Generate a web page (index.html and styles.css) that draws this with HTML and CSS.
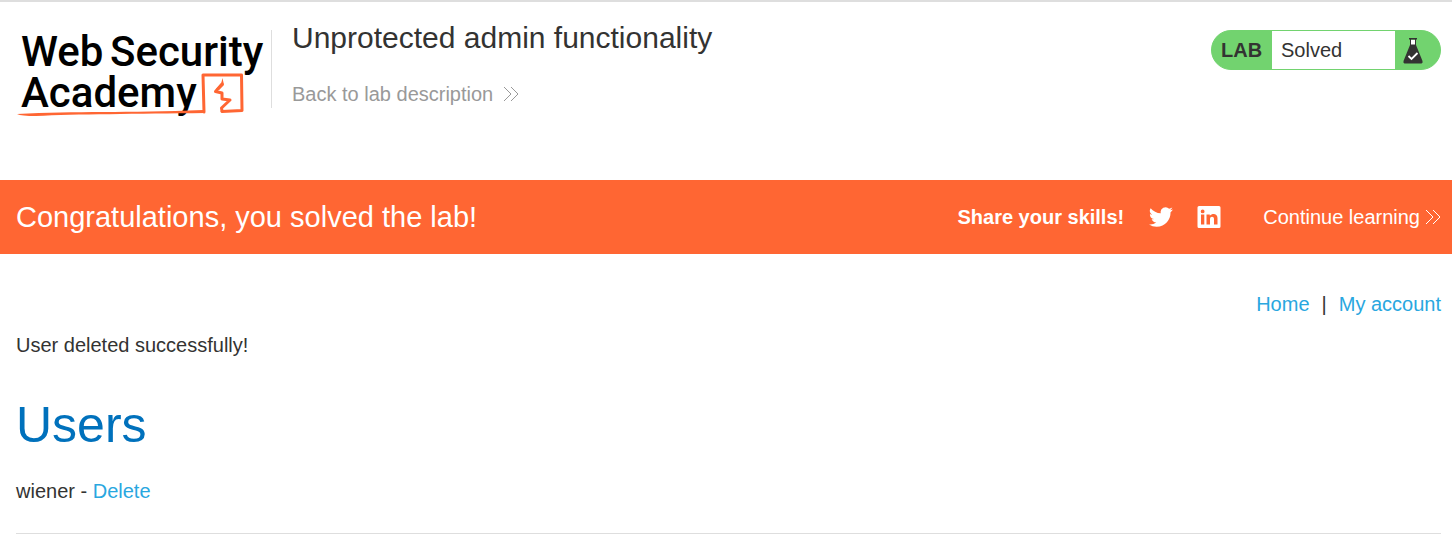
FILE: index.html
```html
<!DOCTYPE html>
<html lang="en">
<head>
<meta charset="utf-8">
<meta name="viewport" content="width=device-width, initial-scale=1">
<title>Unprotected admin functionality</title>
<link rel="stylesheet" href="styles.css">
</head>
<body>
<header class="lab-header">
  <a class="logo" href="#" aria-label="Web Security Academy">
    <svg class="logo-art" viewBox="0 0 256 90">
      <g class="logo-text">
        <text x="5" y="38">Web</text>
        <text x="94" y="38">Security</text>
        <text x="5" y="79">Academy</text>
      </g>
      <g fill="none" stroke="#ff6633" stroke-linejoin="round" stroke-linecap="round">
        <path stroke-width="3" d="M188 84L187 47L225.500 47L226 82.500L206 83.500"/>
        <path stroke-width="3" d="M206 56L199.500 63.500L206 65L206 71L214 72L205.500 80L206 83"/>
      </g>
      <path fill="#ff6633" d="M206.500 50L208 57L203 62L200 61L205 56Z"/>
      <path fill="#ff6633" d="M1 86C60 83 110 85 187 82L189 85C120 86 60 86 20 88Q5 88 1 86Z"/>
    </svg>
  </a>
  <div class="title">
    <h2 class="title-text">Unprotected admin functionality</h2>
    <a class="back" href="#">Back to lab description
      <svg class="chevrons" viewBox="0 0 16 16"><path d="M1 1l7 7-7 7M8 1l7 7-7 7"/></svg>
    </a>
  </div>
  <div class="status">
    <span class="status-label">LAB</span>
    <span class="status-value">Solved</span>
    <span class="status-icon">
      <svg class="flask" viewBox="0 0 20 26"><path fill="#fff" d="M7 2h6v6H7z"/><path fill="#333332" fill-rule="evenodd" d="M6 0h8v1.500h-1V7l6.500 16Q20 25 18.500 25.500H1.500Q0 25 .5 23L7 7V1.500H6zM8 1.500V6.500h4V1.500z"/><path fill="none" stroke="#fff" stroke-width="1.800" d="M5.500 18l3 3 6-6"/></svg>
    </span>
  </div>
</header>
<section class="banner">
  <h4 class="banner-text">Congratulations, you solved the lab!</h4>
  <span class="share">Share your skills!</span>
  <a class="social" href="#" aria-label="Share on Twitter"><svg class="icon" viewBox="0 0 24 24"><path fill="#fff" d="M23.950 4.570a10 10 0 0 1-2.820.77 4.960 4.960 0 0 0 2.160-2.720c-.95.560-2 .96-3.130 1.180a4.920 4.920 0 0 0-8.380 4.480C7.690 8.090 4.070 6.130 1.640 3.160a4.920 4.920 0 0 0 1.520 6.570 4.900 4.900 0 0 1-2.230-.61v.06a4.920 4.920 0 0 0 3.950 4.830 5 5 0 0 1-2.210.08 4.940 4.940 0 0 0 4.600 3.420A9.870 9.870 0 0 1 0 19.540a13.990 13.990 0 0 0 7.550 2.210c9.050 0 14-7.500 14-13.980 0-.21 0-.42-.02-.63a9.940 9.940 0 0 0 2.420-2.570z"/></svg></a>
  <a class="social" href="#" aria-label="Share on LinkedIn"><svg class="icon" viewBox="0 0 24 24"><path fill="#fff" fill-rule="evenodd" d="M2 1h20q1.500 0 1.500 1.500v19Q23.500 23 22 23H2Q.5 23 .5 21.500v-19Q.5 1 2 1zM4 9.500v10h3.300v-10zM5.650 4.500a1.900 1.900 0 1 0 0 3.800 1.900 1.900 0 0 0 0-3.800zM9.500 9.500v10h3.500v-5.500c0-3 4-3 4 0v5.500h3.500v-6.500c0-4.800-5.500-5-7.700-2.200V9.500z"/></svg></a>
  <a class="continue" href="#">Continue learning
    <svg class="chevrons" viewBox="0 0 16 16"><path d="M1 1l7 7-7 7M8 1l7 7-7 7"/></svg>
  </a>
</section>
<main class="content">
  <nav class="nav"><a class="link" href="#">Home</a><span>|</span><a class="link" href="#">My account</a></nav>
  <p class="message">User deleted successfully!</p>
  <h1 class="heading">Users</h1>
  <div class="user"><span>wiener - </span><a class="link" href="#">Delete</a></div>
  <hr class="rule">
</main>
</body>
</html>
```
FILE: styles.css
```css
* { box-sizing: border-box; }
body {
  margin: 0;
  border-top: 2px solid #dedede;
  background: #fff;
  color: #333332;
  font-family: "Liberation Sans", Arial, sans-serif;
  font-size: 20px;
  line-height: 24px;
}
h1, h2, h4, p { margin: 0; font-weight: 400; }
a { color: inherit; text-decoration: none; }
svg { display: block; flex: none; }

.lab-header {
  display: flex;
  align-items: flex-start;
  padding: 18px 11px 72px 16px;
}
.logo {
  height: 88px;
  padding-top: 8px;
}
.logo-art { width: 256px; height: 90px; overflow: visible; }
.logo-text {
  font-family: Roboto, "Liberation Sans", sans-serif;
  font-size: 42px;
  font-weight: 500;
  fill: #000;
}
.title {
  position: relative;
  flex: 1;
  padding-left: 20px;
}
.title::before {
  content: "";
  position: absolute;
  left: -1px;
  top: 10px;
  bottom: -2px;
  border-left: 1px solid #dedede;
}
.title-text {
  font-size: 30px;
  line-height: 36px;
  margin-bottom: 26px;
}
.back {
  display: inline-flex;
  align-items: center;
  gap: 10px;
  color: #999;
}
.chevrons {
  width: 16px;
  height: 16px;
  fill: none;
  stroke: currentColor;
}
.status {
  display: flex;
  width: 230px;
  height: 40px;
  margin-top: 10px;
  border: 1px solid #72d36f;
  border-radius: 20px;
  overflow: hidden;
  background: #72d36f;
  line-height: 38px;
}
.status-label { width: 60px; padding-left: 9px; font-weight: 700; }
.status-value { flex: 1; padding-left: 9px; background: #fff; }
.status-icon { width: 45px; padding: 7px 0 0 8px; }
.flask { width: 20px; height: 26px; }

.banner {
  display: flex;
  align-items: center;
  height: 74px;
  padding: 0 11px 0 16px;
  background: #ff6633;
  color: #fff;
}
.banner-text { flex: 1; font-size: 29px; line-height: 36px; }
.share { margin-right: 25px; font-weight: 700; }
.social { margin-right: 24px; }
.icon { width: 24px; height: 24px; }
.continue {
  display: flex;
  align-items: center;
  gap: 5px;
  margin-left: 18px;
}

.content { padding: 38px 11px 0 16px; }
.nav { display: flex; justify-content: flex-end; gap: 12px; }
.link { color: #29a7df; }
.message { margin-top: 17px; }
.heading {
  margin: 38px 0 24px;
  color: #0071bc;
  font-size: 50px;
  line-height: 60px;
}
.user { white-space: pre-wrap; }
.rule {
  margin: 30px 0 0;
  border: 0;
  border-top: 1px solid #dedede;
}
```
